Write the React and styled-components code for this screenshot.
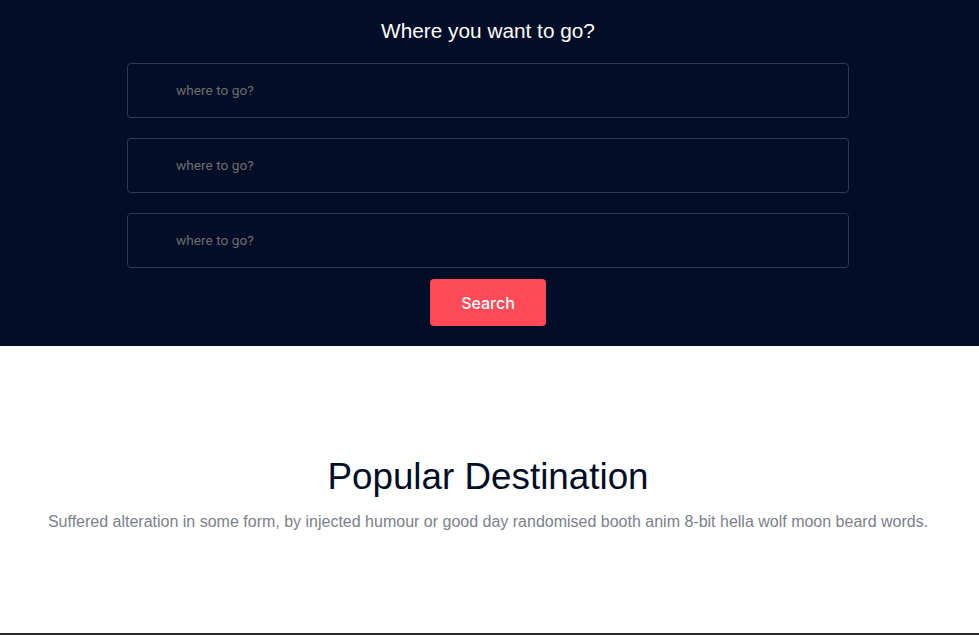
import React from "react";
import styled, { createGlobalStyle } from "styled-components";

const Global = createGlobalStyle`
  html, body { margin: 0; padding: 0; background: #ffffff; }
  body { font-family: "Liberation Sans", Arial, sans-serif; }
  * { box-sizing: border-box; }
`;

const Hero = styled.section`
  background: #020d27;
  padding: 19px 3px 20px 0;
  display: flex;
  flex-direction: column;
  align-items: center;
`;

const HeroTitle = styled.h2`
  margin: 0 0 21px;
  color: #ffffff;
  font-family: "Liberation Sans", Arial, sans-serif;
  font-weight: 400;
  font-size: 20.8px;
  line-height: 23px;
`;

const Form = styled.form`
  width: 722px;
  display: flex;
  flex-direction: column;
  align-items: center;
  gap: 20px;
`;

const Field = styled.input`
  width: 100%;
  height: 55px;
  background: transparent;
  border: 1px solid #2f3a51;
  border-radius: 4px;
  padding: 0 0 1px 48px;
  color: #ffffff;
  font-family: Roboto, "Liberation Sans", sans-serif;
  font-size: 13.7px;
  outline: none;
  &::placeholder { color: #6f6f6f; }
`;

const Button = styled.button`
  margin-top: -9px;
  width: 116px;
  height: 47px;
  border: none;
  border-radius: 4px;
  background: #ff4a57;
  color: #ffffff;
  font-family: Inter, Roboto, sans-serif;
  font-size: 16px;
  font-weight: 500;
  cursor: pointer;
`;

const Popular = styled.section`
  height: 287px;
  padding: 110px 3px 0 0;
  display: flex;
  flex-direction: column;
  align-items: center;
  text-align: center;
`;

const PopTitle = styled.h2`
  margin: 0 0 15px;
  color: #020d27;
  font-family: "Liberation Sans", Arial, sans-serif;
  font-weight: 400;
  font-size: 36.8px;
  line-height: 42px;
`;

const PopText = styled.p`
  margin: 0;
  color: #7d808a;
  font-family: "Liberation Sans", Arial, sans-serif;
  font-size: 16px;
  line-height: 18px;
`;

const NextSection = styled.div`
  height: 40px;
  border-top: 2px solid #2a2a2a;
  background: #ffffff;
`;

export default function App() {
  return (
    <>
      <Global />
      <Hero>
        <HeroTitle>Where you want to go?</HeroTitle>
        <Form onSubmit={(e) => e.preventDefault()}>
          <Field placeholder="where to go?" />
          <Field placeholder="where to go?" />
          <Field placeholder="where to go?" />
          <Button type="submit">Search</Button>
        </Form>
      </Hero>
      <Popular>
        <PopTitle>Popular Destination</PopTitle>
        <PopText>
          Suffered alteration in some form, by injected humour or good day randomised booth anim 8-bit hella wolf moon beard words.
        </PopText>
      </Popular>
      <NextSection />
    </>
  );
}
